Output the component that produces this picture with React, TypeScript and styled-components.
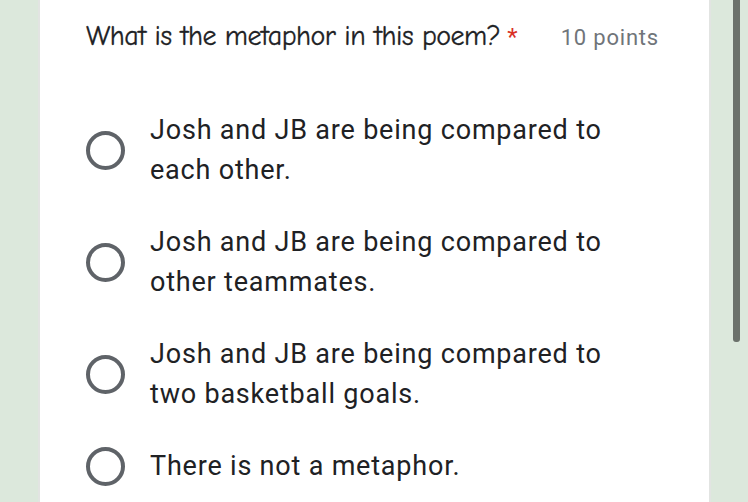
import React from "react";
import styled, { createGlobalStyle } from "styled-components";

const Global = createGlobalStyle`
  html, body { margin: 0; padding: 0; }
  body { width: 748px; height: 502px; overflow: hidden; background: #dce8dc; }
`;

const Page = styled.div`
  display: flex;
  width: 748px;
  height: 502px;
  background: #dce8dc;
`;

const Gutter = styled.div<{ $w: number }>`
  width: ${(p) => p.$w}px;
  flex: none;
  position: relative;
`;

const Card = styled.main`
  width: 673px;
  flex: none;
  background: #ffffff;
  border-left: 2px solid #e2e4e2;
  border-right: 2px solid #e2e4e2;
  box-sizing: border-box;
  padding: 20px 0 0 46px;
  display: flex;
  flex-direction: column;
`;

const Header = styled.div`
  display: flex;
  align-items: baseline;
  height: 40px;
`;

const Title = styled.h1`
  margin: 0;
  font-family: "Comic Neue", "Patrick Hand", "DejaVu Sans Condensed", sans-serif;
  font-weight: 400;
  font-size: 28px;
  color: #202124;
  letter-spacing: -0.5px;
  -webkit-text-stroke: 0.3px #202124;
`;

const Star = styled.span`
  color: #d93025;
  margin-left: 7px;
  font-family: "Roboto", sans-serif;
  font-size: 24px;
  letter-spacing: 0;
  -webkit-text-stroke: 0;
`;

const Points = styled.span`
  margin-left: auto;
  margin-right: 50px;
  font-family: "Roboto", sans-serif;
  font-size: 22px;
  letter-spacing: 0.8px;
  color: #70757a;
`;

const Options = styled.div`
  display: flex;
  flex-direction: column;
  gap: 32px;
  margin-top: 50px;
`;

const Option = styled.label`
  display: flex;
  align-items: center;
`;

const Radio = styled.span`
  width: 39px;
  height: 39px;
  box-sizing: border-box;
  border: 4px solid #5f6368;
  border-radius: 50%;
  flex: none;
  margin-right: 25px;
`;

const Text = styled.span`
  font-family: "Roboto", sans-serif;
  font-size: 27px;
  letter-spacing: 0.8px;
  line-height: 40px;
  color: #202124;
  width: 480px;
`;

const Scrollbar = styled.div`
  position: absolute;
  left: 22px;
  top: 0;
  width: 7px;
  height: 342px;
  background: #6b716b;
  border-radius: 0 0 3px 3px;
`;

const options = [
  "Josh and JB are being compared to each other.",
  "Josh and JB are being compared to other teammates.",
  "Josh and JB are being compared to two basketball goals.",
  "There is not a metaphor.",
];

export default function App() {
  return (
    <Page>
      <Global />
      <Gutter $w={38} />
      <Card>
        <Header>
          <Title>
            What is the metaphor in this poem?<Star>*</Star>
          </Title>
          <Points>10 points</Points>
        </Header>
        <Options>
          {options.map((o) => (
            <Option key={o}>
              <Radio />
              <Text>{o}</Text>
            </Option>
          ))}
        </Options>
      </Card>
      <Gutter $w={37}>
        <Scrollbar />
      </Gutter>
    </Page>
  );
}
